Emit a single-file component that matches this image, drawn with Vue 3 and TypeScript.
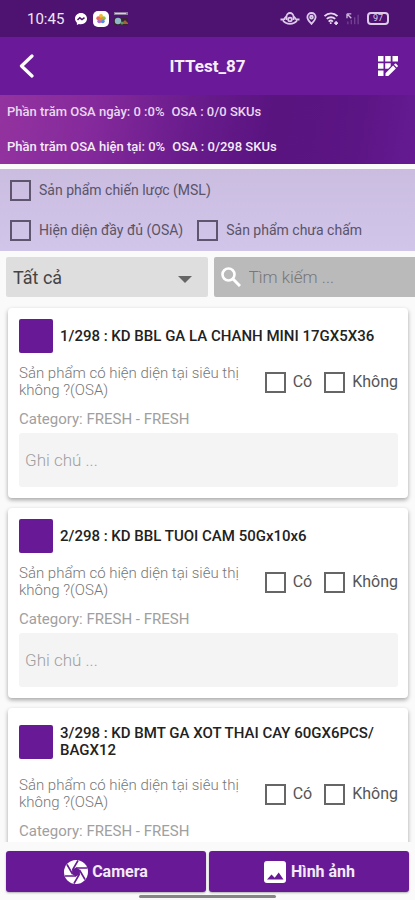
<script setup lang="ts">
import { ref } from 'vue'

interface Product {
  id: number
  name: string
  category: string
}

const total = 298
const products: Product[] = [
  { id: 1, name: 'KD BBL GA LA CHANH MINI 17GX5X36', category: 'FRESH - FRESH' },
  { id: 2, name: 'KD BBL TUOI CAM 50Gx10x6', category: 'FRESH - FRESH' },
  { id: 3, name: 'KD BMT GA XOT THAI CAY 60GX6PCS/ BAGX12', category: 'FRESH - FRESH' },
]

const group = ref('all')
const keyword = ref('')
</script>

<template>
  <div class="screen">
    <div class="status">
      <div class="status-side">
        <span class="clock">10:45</span>
        <svg class="status-icon" viewBox="0 0 14 14" aria-hidden="true">
          <path fill="#fff" d="M7 1C3.500 1 1 3.500 1 6.600c0 1.700.7 3.100 1.900 4.100V13l2-1.100c.7.2 1.400.3 2.100.3 3.500 0 6-2.500 6-5.600S10.500 1 7 1z" />
          <path fill="none" stroke="#4a126e" stroke-width="1.500" d="M3.500 8l2.300-2.200L8 7.600l2.500-2" />
        </svg>
        <svg class="status-icon wide" viewBox="0 0 16 16" aria-hidden="true">
          <rect width="16" height="16" rx="5" fill="#fff" />
          <circle cx="8" cy="5" r="2" fill="#f7b733" />
          <circle cx="5.300" cy="7.300" r="2" fill="#ef6a5a" />
          <circle cx="10.700" cy="7.300" r="2" fill="#8bc34a" />
          <circle cx="6.300" cy="10.300" r="2" fill="#b06ad8" />
          <circle cx="9.700" cy="10.300" r="2" fill="#4f8ff0" />
          <circle cx="8" cy="8" r="1.800" fill="#f08a2c" />
        </svg>
        <svg class="status-icon" viewBox="0 0 14 14" aria-hidden="true">
          <rect y="0" width="14" height="3" fill="#8d7b9c" />
          <rect x="1" y="1" width="11" height="1" fill="#d9cfe0" />
          <rect y="6" width="14" height="7" fill="#3a2238" />
          <circle cx="4" cy="9" r="3.200" fill="#8fb9c9" />
          <path d="M7 12l4-4 3 3v1z" fill="#a0623a" />
          <circle cx="8" cy="11" r="1.500" fill="#5d9a55" />
        </svg>
      </div>
      <div class="status-side right">
        <svg class="eye" viewBox="0 0 20 14" fill="none" stroke="#dccbe8" stroke-width="1.800" aria-hidden="true">
          <path d="M0.500 7.500h3.500M19.500 7.500H16M3 8.500c3.500 4.500 10.500 4.500 14 0M4 7.500c1-2 1.500-2.500 2.500-3M16 7.500c-1-2-1.500-2.500-2.500-3" />
          <path d="M6.500 8V4.500a3.500 3.500 0 0 1 7 0V8" />
          <circle cx="10" cy="7.500" r="1.800" />
        </svg>
        <svg class="pin" viewBox="0 0 12 14" fill="none" stroke="#dccbe8" stroke-width="2" aria-hidden="true">
          <path d="M6 12.800C3.500 10 1.500 8 1.500 5.500a4.500 4.500 0 0 1 9 0C10.500 8 8.500 10 6 12.800z" />
          <circle cx="6" cy="5.500" r="1.500" />
        </svg>
        <svg class="wifi" viewBox="0 0 16 14" fill="none" stroke="#e6d9ef" stroke-width="2" aria-hidden="true">
          <path d="M1 4.500c4-4 10-4 14 0M3.500 7.500c2.500-2.500 6.500-2.500 9 0M5.500 10.300c1.300-1.300 3.200-1.300 4.500 0" />
          <path d="M7.700 13v-2M13.500 10v4M11.500 12h4" stroke-width="1.800" />
        </svg>
        <svg class="signal" viewBox="0 0 16 14" aria-hidden="true">
          <path d="M1 1h5M1 1v5M2 2l4 4" stroke="#cdb9db" stroke-width="1.600" fill="none" />
          <path d="M2 10v3M6 8v5M10 5v8M14 2v11" stroke="#754493" stroke-width="1.500" />
        </svg>
        <span class="battery">97</span>
      </div>
    </div>

    <header class="header">
      <button class="icon-button" type="button" aria-label="Back">
        <svg class="back" viewBox="0 0 16 24" fill="none" stroke="#fff" stroke-width="3.200" stroke-linecap="round" stroke-linejoin="round">
          <path d="M13 2L2.500 12 13 22" />
        </svg>
      </button>
      <h1 class="title">ITTest_87</h1>
      <button class="icon-button" type="button" aria-label="Edit grid">
        <svg class="grid-icon" viewBox="0 0 20 20" fill="#fff">
          <path d="M0 0h5.500v5.500H0zM7.200 0h5.500v5.500H7.200zM14.500 0H20v5.500h-5.500zM0 7.200h5.500v5.500H0zM7.200 7.200h5.500v3l-2.500 2.500h-3zM0 14.500h5.500V20H0z" />
          <path d="M7.500 17.200l7.600-7.600 2.800 2.800-7.600 7.600H7.500zM16 8.700l.9-.9q.6-.5 1.200 0l1.600 1.600q.5.600 0 1.200l-.9.9z" />
        </svg>
      </button>
    </header>

    <section class="summary">
      <p class="summary-line"><span>Phần trăm OSA ngày: 0 :0%</span><span>OSA : 0/0 SKUs</span></p>
      <p class="summary-line"><span>Phần trăm OSA hiện tại: 0%</span><span>OSA : 0/298 SKUs</span></p>
    </section>

    <section class="filters">
      <label class="check"><input type="checkbox" />Sản phẩm chiến lược (MSL)</label>
      <div class="filter-row">
        <label class="check"><input type="checkbox" />Hiện diện đầy đủ (OSA)</label>
        <label class="check"><input type="checkbox" />Sản phẩm chưa chấm</label>
      </div>
    </section>

    <div class="tools">
      <div class="select-wrap">
        <select v-model="group" class="select" aria-label="Nhóm">
          <option value="all">Tất cả</option>
        </select>
        <span class="arrow"></span>
      </div>
      <label class="search">
        <svg class="search-icon" viewBox="0 0 20 20" fill="none" stroke="#fff" stroke-width="2.600">
          <circle cx="7.500" cy="7.500" r="6" />
          <path d="M12 12l7 7" stroke-width="3" />
        </svg>
        <input v-model="keyword" type="text" placeholder="Tìm kiếm ..." aria-label="Tìm kiếm" />
      </label>
    </div>

    <main class="list">
      <article v-for="p in products" :key="p.id" class="card">
        <div class="card-head">
          <span class="swatch"></span>
          <h2 class="name">{{ p.id }}/{{ total }} : {{ p.name }}</h2>
        </div>
        <div class="question">
          <p class="question-text">Sản phẩm có hiện diện tại siêu thị không ?(OSA)</p>
          <label class="answer"><input type="checkbox" />Có</label>
          <label class="answer"><input type="checkbox" />Không</label>
        </div>
        <p class="category">Category: {{ p.category }}</p>
        <input class="note" type="text" placeholder="Ghi chú ..." aria-label="Ghi chú" />
      </article>
    </main>

    <footer class="actions">
      <button class="action" type="button">
        <svg class="action-icon" viewBox="0 0 24 24">
          <circle cx="12" cy="12" r="12" fill="#fff" />
          <path fill="none" stroke="#681a96" stroke-width="1.600" d="M8.500 10L14 .5M12 8l11 0M15.500 10l5.500 9.500M15.500 14L10 23.500M12 16H1M8.500 14L3 4.500" />
          <path fill="#681a96" d="M12 7.500l3.900 2.250v4.500L12 16.500l-3.900-2.250v-4.500z" />
        </svg>
        Camera
      </button>
      <button class="action" type="button">
        <svg class="action-icon" viewBox="0 0 24 24">
          <rect x="1" y="1" width="22" height="22" rx="3" fill="#fff" />
          <path fill="#681a96" d="M4 19.500l4.500-5 3.200 3.300 4-5.300 4.800 7z" />
        </svg>
        Hình ảnh
      </button>
    </footer>
    <div class="home"><span class="home-bar"></span></div>
  </div>
</template>

<style>
body {
  background: #fafafa;
}
</style>

<style scoped>
* {
  box-sizing: border-box;
}

.screen {
  display: flex;
  flex-direction: column;
  height: 100vh;
  overflow: hidden;
  font-family: Roboto, "Noto Sans", sans-serif;
  background: #fafafa;
}

h1,
h2,
p {
  margin: 0;
}

button,
input,
select {
  font: inherit;
  border: 0;
  margin: 0;
  border-radius: 0;
}

.status {
  flex: none;
  display: flex;
  justify-content: space-between;
  align-items: center;
  height: 37px;
  padding: 0 26px 0 27px;
  background: #4e1270;
}

.status-side {
  display: flex;
  align-items: center;
  gap: 5px;
}

.status-side.right {
  gap: 6px;
}

.clock {
  margin-right: 5px;
  font-size: 15px;
  color: #efe6f5;
}

.status-icon {
  width: 14px;
  height: 14px;
}

.status-icon.wide {
  width: 16px;
  height: 16px;
}

.eye {
  width: 20px;
  height: 14px;
}

.pin {
  width: 11px;
  height: 13px;
}

.wifi {
  width: 16px;
  height: 13px;
}

.signal {
  width: 16px;
  height: 12px;
}

.battery {
  width: 22px;
  height: 13px;
  border: 2px solid #dccbe8;
  border-radius: 4px;
  font-size: 9px;
  line-height: 9px;
  text-align: center;
  color: #dccbe8;
}

.header {
  flex: none;
  display: flex;
  align-items: center;
  height: 58px;
  padding: 0 10px;
  background: #6a1a99;
}

.icon-button {
  display: flex;
  align-items: center;
  justify-content: center;
  width: 34px;
  height: 40px;
  padding: 0;
  background: none;
}

.back {
  width: 16px;
  height: 24px;
}

.grid-icon {
  width: 20px;
  height: 20px;
}

.title {
  flex: 1;
  text-align: center;
  font-size: 17px;
  font-weight: 700;
  color: #f6effa;
}

.summary {
  flex: none;
  height: 69px;
  padding: 8px 7px;
  background: linear-gradient(100deg, #93339f 0%, #852a9c 22%, #6a1c8d 45%, #591480 65%, #5c1584 85%, #651a93 100%);
}

.summary-line {
  display: flex;
  gap: 7px;
  font-size: 13px;
  font-weight: 500;
  line-height: 18px;
  color: #e9d7f0;
}

.summary-line + .summary-line {
  margin-top: 17px;
  color: #f5ebf9;
}

.filters {
  flex: none;
  display: flex;
  flex-direction: column;
  gap: 18px;
  margin-top: 5px;
  padding: 10px;
  background: linear-gradient(#cabde0, #d1c5ea);
}

.filter-row {
  display: flex;
  gap: 14px;
}

.check,
.answer {
  display: flex;
  align-items: center;
  gap: 8px;
  font-size: 14px;
  line-height: 22px;
  color: #5b5368;
  white-space: nowrap;
}

.answer {
  gap: 7px;
  font-size: 16px;
  color: #555;
}

input[type="checkbox"] {
  appearance: none;
  flex: none;
  width: 21px;
  height: 21px;
  border: 2px solid #5f556e;
  background: transparent;
}

.answer input[type="checkbox"] {
  border-color: #666;
}

.tools {
  flex: none;
  display: grid;
  grid-template-columns: 1fr 1fr;
  gap: 6px;
  padding: 6px 0 0 6px;
}

.select-wrap {
  position: relative;
  min-width: 0;
}

.select {
  appearance: none;
  display: block;
  width: 100%;
  height: 40px;
  padding: 0 7px;
  background: #dedede;
  border-radius: 2px;
  font-size: 18px;
  color: #444;
}

.arrow {
  position: absolute;
  right: 16px;
  top: 19px;
  border: 7px solid transparent;
  border-top-color: #666;
  border-bottom: 0;
  pointer-events: none;
}

.search {
  min-width: 0;
  display: flex;
  align-items: center;
  gap: 8px;
  height: 40px;
  padding: 0 7px;
  background: #bababa;
  border-radius: 2px 0 0 2px;
}

.search-icon {
  flex: none;
  width: 20px;
  height: 20px;
}

.search input {
  flex: 1;
  min-width: 0;
  padding: 0;
  background: none;
  font-size: 17px;
  font-weight: 300;
  color: #555;
}

.search input::placeholder {
  color: #777;
}

.list {
  flex: 1;
  min-height: 0;
  display: flex;
  flex-direction: column;
  gap: 10px;
  margin-top: 5px;
  padding: 6px 7px 6px 8px;
  overflow-y: auto;
  scrollbar-width: none;
}

.card {
  flex: none;
  padding: 11px 10px 11px 11px;
  background: #fff;
  border-radius: 4px;
  box-shadow: 0 2px 4px rgba(0, 0, 0, 0.34);
}

.card-head {
  display: flex;
  align-items: center;
  gap: 7px;
  min-height: 34px;
}

.swatch {
  flex: none;
  width: 34px;
  height: 34px;
  background: #681a96;
  border-radius: 2px;
}

.name {
  padding: 6px 0;
  font-size: 15px;
  font-weight: 500;
  line-height: 17px;
  color: #222;
}

.question {
  display: flex;
  align-items: center;
  margin-top: 12px;
}

.question-text {
  flex: 1;
  font-size: 15px;
  font-weight: 300;
  line-height: 17px;
  color: #777;
}

.answer + .answer {
  margin-left: 12px;
}

.category {
  margin-top: 12px;
  font-size: 15px;
  line-height: 17px;
  color: #a0a0a0;
}

.note {
  display: block;
  width: 100%;
  height: 54px;
  margin-top: 5px;
  padding: 0 6px;
  background: #f4f4f4;
  border-radius: 3px;
  font-size: 17px;
  font-weight: 300;
  color: #555;
}

.note::placeholder {
  color: #a0a0a0;
}

.actions {
  flex: none;
  display: flex;
  gap: 3px;
  padding: 9px 6px 0;
}

.action {
  flex: 1;
  display: flex;
  align-items: center;
  justify-content: center;
  gap: 4px;
  height: 41px;
  padding: 0;
  background: #681a96;
  border-radius: 3px;
  box-shadow: 0 1px 2px rgba(0, 0, 0, 0.3);
  font-size: 16px;
  font-weight: 700;
  color: #f3eaf8;
}

.action-icon {
  width: 24px;
  height: 24px;
}

.home {
  flex: none;
  display: flex;
  justify-content: center;
  align-items: flex-start;
  height: 8px;
  padding-top: 3px;
}

.home-bar {
  width: 33%;
  height: 3px;
  background: #858585;
  border-radius: 2px;
}
</style>
